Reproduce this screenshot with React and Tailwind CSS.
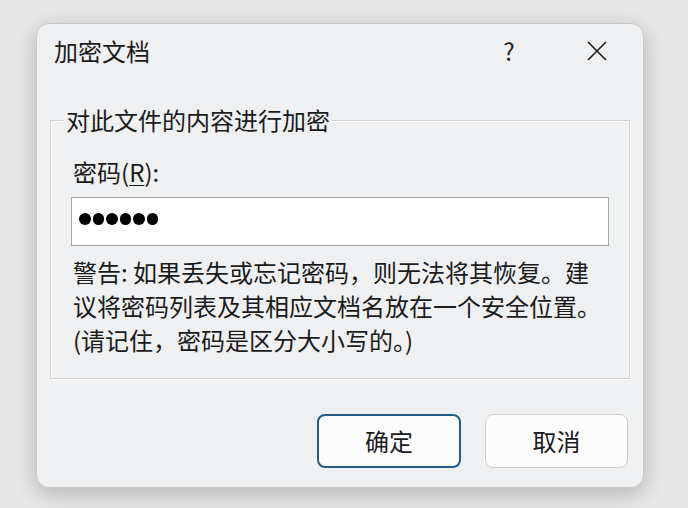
import React from "react";

const font = { fontFamily: '"Noto Sans CJK SC", "Noto Sans", sans-serif' };

export default function App() {
  return (
    <div
      className="w-[688px] h-[508px] bg-[#e7e7e7] pt-[23px] pl-[36px] overflow-hidden text-[#1b1b1b]"
      style={font}
    >
      <div className="w-[608px] h-[465px] rounded-[13px] border border-[#c9c9c9] bg-[#eff0f1] shadow-[0_6px_22px_rgba(0,0,0,0.22)] flex flex-col">
        {/* title bar */}
        <div className="h-[54px] flex items-center pl-[17px] shrink-0">
          <div className="text-[24px] leading-none">加密文档</div>
          <div className="flex-1" />
          <div className="text-[24px] leading-none w-[30px] text-center mr-[62px]">?</div>
          <svg width="22" height="22" viewBox="0 0 22 22" className="mr-[35px]">
            <path d="M2 2 L20 20 M20 2 L2 20" stroke="#1b1b1b" strokeWidth="1.6" fill="none" />
          </svg>
        </div>
        {/* group box */}
        <fieldset className="mx-[13px] border border-[#d4d4d4] shadow-[inset_1px_1px_0_#fbfbfb,1px_1px_0_#fbfbfb] px-[20px] pt-[23px] pb-[21px] mt-[30px]">
          <legend className="ml-[-7px] px-[2px] text-[24px] leading-[24px]">对此文件的内容进行加密</legend>
          <div className="text-[24px] leading-[34px] ml-[2px]">
            密码(<span className="underline underline-offset-[3px] decoration-[1px]">R</span>):
          </div>
          <div className="mt-[8px] h-[49px] bg-white border border-[#a3a3a3] flex items-center pl-[7px] gap-[2px]">
            {[0, 1, 2, 3, 4, 5].map((i) => (
              <div key={i} className="w-[11.5px] h-[11.5px] rounded-full bg-black mt-[-5px]" />
            ))}
          </div>
          <div className="mt-[9px] ml-[2px] text-[24px] leading-[34px] whitespace-nowrap">
            <div>警告: 如果丢失或忘记密码，则无法将其恢复。建</div>
            <div>议将密码列表及其相应文档名放在一个安全位置。</div>
            <div>(请记住，密码是区分大小写的。)</div>
          </div>
        </fieldset>
        {/* buttons */}
        <div className="flex justify-end gap-[24px] pr-[15px] mt-[35px]">
          <button className="w-[144px] h-[54px] rounded-[8px] border-2 border-[#245c88] bg-[#fcfcfd] text-[24px] leading-none text-[#1b1b1b]">
            确定
          </button>
          <button className="w-[143px] h-[54px] rounded-[8px] border border-[#cdcdcd] bg-[#fcfcfd] text-[24px] leading-none text-[#1b1b1b]">
            取消
          </button>
        </div>
      </div>
    </div>
  );
}
